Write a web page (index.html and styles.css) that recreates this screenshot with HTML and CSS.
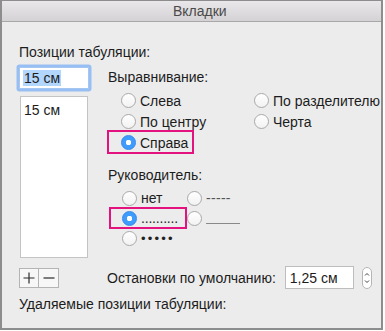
FILE: index.html
```html
<!DOCTYPE html>
<html lang="ru">
  <head>
    <meta charset="UTF-8" />
    <meta name="viewport" content="width=device-width, initial-scale=1.0" />
    <title>Вкладки</title>
    <link rel="stylesheet" href="styles.css">
  </head>
  <body>
    <div class="window">
      <div class="titlebar">Вкладки</div>
      <div class="content">
        <div class="label first">Позиции табуляции:</div>

        <div class="main">
          <div class="left">
            <div class="tab-input"><span class="sel">15 см</span></div>
            <div class="tab-list"><div class="item">15 см</div></div>
          </div>

          <div class="right">
            <div class="group-title">Выравнивание:</div>
            <div class="align-grid">
              <label class="opt"><span class="radio"></span>Слева</label>
              <label class="opt"><span class="radio"></span>По разделителю</label>
              <label class="opt"><span class="radio"></span>По центру</label>
              <label class="opt"><span class="radio"></span>Черта</label>
              <label class="opt marked mark-align"><span class="radio on"></span>Справа</label>
            </div>

            <div class="group-title leader-title">Руководитель:</div>
            <div class="leader-grid">
              <label class="opt"><span class="radio"></span>нет</label>
              <label class="opt"><span class="radio"></span><span class="dash">-----</span></label>
              <label class="opt marked mark-leader"><span class="radio on"></span><span class="dots">..........</span></label>
              <label class="opt"><span class="radio"></span><span class="line"></span></label>
              <label class="opt"><span class="radio"></span><span class="bullets">•••••</span></label>
            </div>
          </div>
        </div>

        <div class="bottom-row">
          <div class="pm">
            <button class="pm-btn" title="+">
              <svg width="12" height="12" viewBox="0 0 12 12"><path d="M6 0.5 V11.5 M0.5 6 H11.5" stroke="#2b2b2b" stroke-width="1.2" /></svg>
            </button><button class="pm-btn" title="−">
              <svg width="12" height="12" viewBox="0 0 12 12"><path d="M0.5 6 H11.5" stroke="#2b2b2b" stroke-width="1.2" /></svg>
            </button>
          </div>
          <div class="defaults">
            <span>Остановки по умолчанию:</span>
            <div class="def-input">1,25 см</div>
            <div class="stepper">
              <svg width="10" height="22" viewBox="0 0 10 22">
                <rect x="0.5" y="0.5" width="9" height="21" rx="4.5" fill="#fff" stroke="#b5b5b5" />
                <path d="M3 8.5 L5 6.5 L7 8.5" fill="none" stroke="#444" stroke-width="1" />
                <path d="M3 13.5 L5 15.5 L7 13.5" fill="none" stroke="#444" stroke-width="1" />
              </svg>
            </div>
          </div>
        </div>

        <div class="label last">Удаляемые позиции табуляции:</div>
      </div>
    </div>
  </body>
</html>
```

FILE: styles.css
```css
body {
  margin: 0;
  background-color: #fff;
  font-family: "Liberation Sans", Arial, sans-serif;
  font-size: 14px;
  color: #1c1c1c;
}
.window {
  width: 379px;
  height: 327px;
  border: 2px solid #8d8d8d;
  border-top: 1px solid #8d8d8d;
  background-color: #ececec;
}
.titlebar {
  height: 20px;
  line-height: 20px;
  border-bottom: 1px solid #a8a8a8;
  background: linear-gradient(#e9e7e9, #d4d2d4);
  color: #4a4a4a;
  font-size: 14px;
  padding-left: 171px;
}
.content {
  padding-left: 17px;
}
.label {
  line-height: 16px;
}
.label.first {
  padding-top: 22px;
}
.label.last {
  margin-top: 7px;
}
.main {
  display: flex;
}
.left {
  width: 89px;
}
.tab-input {
  margin-top: 7px;
  box-sizing: border-box;
  width: 70px;
  height: 22px;
  background: #fff;
  border: 1px solid #a5c6f0;
  box-shadow: 0 0 0 2.5px #97bff3;
  border-radius: 1px;
  padding: 2px 3px;
}
.sel {
  display: inline-block;
  background: #b3d6fd;
  line-height: 16px;
  padding: 0 1px;
}
.tab-list {
  margin-top: 7px;
  margin-left: 1px;
  box-sizing: border-box;
  width: 68px;
  height: 162px;
  background: #fff;
  border: 1px solid #c4c4c4;
  padding: 5px 3px;
}
.item {
  line-height: 16px;
}
.group-title {
  margin-top: 9px;
  line-height: 16px;
}
.leader-title {
  margin-top: 14px;
}
.align-grid {
  display: grid;
  grid-template-columns: 133px auto;
  grid-auto-rows: 21px;
  margin-top: 5px;
  margin-left: 13px;
}
.leader-grid {
  display: grid;
  grid-template-columns: 65px auto;
  grid-auto-rows: 20px;
  margin-top: 5px;
  margin-left: 14px;
}
.opt {
  display: flex;
  align-items: center;
  position: relative;
  white-space: nowrap;
}
.radio {
  box-sizing: border-box;
  width: 15px;
  height: 15px;
  border-radius: 50%;
  border: 1px solid #a9a9a9;
  background: linear-gradient(#fff, #f2f2f2);
  margin-right: 4px;
  flex-shrink: 0;
}
.radio.on {
  border-color: #3385ea;
  background: radial-gradient(circle, #fff 0 2.5px, #3e9cfd 3px);
}
.marked::after {
  content: "";
  position: absolute;
  border: 2px solid #e4127f;
}
.mark-align::after {
  left: -14px;
  top: -2px;
  width: 83px;
  height: 20px;
}
.mark-leader::after {
  left: -13px;
  top: -1px;
  width: 74px;
  height: 18px;
}
.dash {
  color: #555;
  letter-spacing: 0.3px;
}
.dots {
  letter-spacing: -0.2px;
}
.line {
  display: inline-block;
  width: 34px;
  height: 1px;
  background: #8a8a8a;
  margin-top: 10px;
}
.bullets {
  font-size: 13px;
  letter-spacing: 2.2px;
  color: #222;
}
.bottom-row {
  display: flex;
  align-items: center;
  margin-top: 8px;
  height: 23px;
}
.pm {
  display: flex;
  width: 89px;
}
.pm-btn {
  box-sizing: border-box;
  display: flex;
  align-items: center;
  justify-content: center;
  width: 20px;
  height: 20px;
  padding: 0;
  border: 1px solid #b4b4b4;
  background: #f7f7f7;
}
.pm-btn + .pm-btn {
  border-left: none;
}
.defaults {
  display: flex;
  align-items: center;
  margin-left: -1px;
}
.def-input {
  box-sizing: border-box;
  width: 69px;
  height: 23px;
  margin-left: 9px;
  background: #fff;
  border: 1px solid #bdbdbd;
  padding: 3px 4px;
  line-height: 16px;
}
.stepper {
  display: flex;
  margin-left: 8px;
}
```
